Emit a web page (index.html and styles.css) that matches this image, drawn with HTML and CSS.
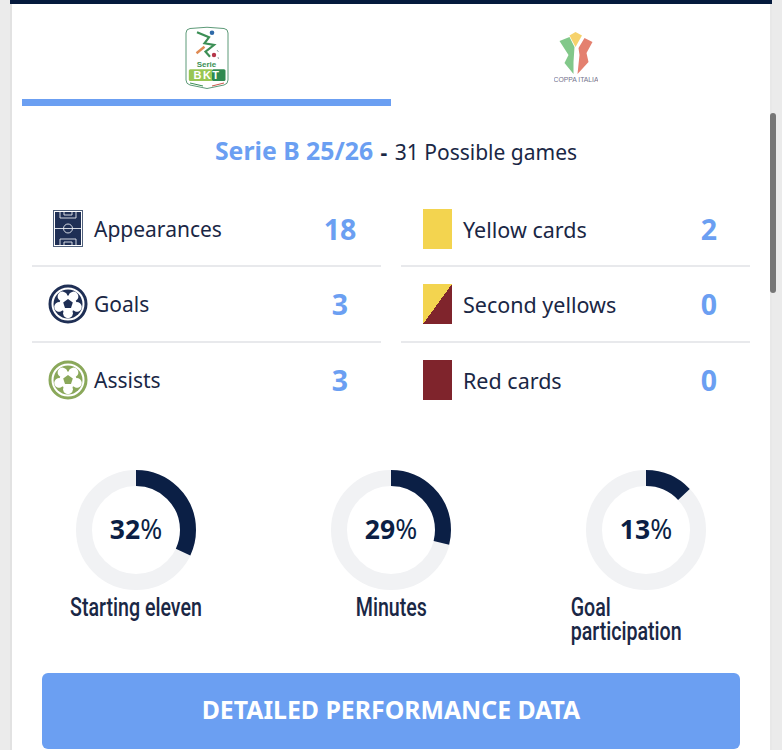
FILE: index.html
```html
<!DOCTYPE html>
<html lang="en">
<head>
<meta charset="utf-8">
<title>Player stats</title>
<link rel="stylesheet" href="styles.css">
</head>
<body>
<svg class="defs" width="0" height="0" aria-hidden="true">
  <defs>
    <g id="panels">
      <circle cx="20" cy="10.700" r="4.900" fill="#fff" transform="rotate(36 20 20)"/>
      <circle cx="20" cy="10.700" r="4.900" fill="#fff" transform="rotate(108 20 20)"/>
      <circle cx="20" cy="10.700" r="4.900" fill="#fff" transform="rotate(180 20 20)"/>
      <circle cx="20" cy="10.700" r="4.900" fill="#fff" transform="rotate(252 20 20)"/>
      <circle cx="20" cy="10.700" r="4.900" fill="#fff" transform="rotate(324 20 20)"/>
      <circle cx="20" cy="20" r="8.500" fill="#fff"/>
    </g>
  </defs>
</svg>
<div class="frame">
<main class="card">
  <nav class="tabs">
    <div class="tab tab-active">
      <svg class="logo-serie" viewBox="0 0 44 64" width="44" height="64">
        <path d="M1 7 Q1 3 5 2.500 Q22 0 39 2.500 Q43 3 43 7 V54 Q43 58 39 59 L22 62.500 L5 59 Q1 58 1 54 Z" fill="#fff" stroke="#5d9a78" stroke-width="1"/>
        <circle cx="27" cy="6.700" r="2.300" fill="#2f6aa8"/>
        <path d="M12 6.300 L24 11.300 L19.500 17.300 L29 19 L20.500 25.700 L25 30.700" fill="none" stroke="#3c8f55" stroke-width="2.200"/>
        <path d="M11.500 27.300 L19.500 20.700" stroke="#df8a52" stroke-width="2.400"/>
        <circle cx="29" cy="29" r="2.200" fill="#b5374a"/>
        <path d="M32 24 L33.500 26 M33 31 L33.500 33" stroke="#99aaaa" stroke-width="1"/>
        <text x="21.500" y="41" class="serie-word">Serie</text>
        <rect x="3.800" y="43.300" width="24" height="11.700" rx="1.500" fill="#98c653"/>
        <rect x="27" y="43.300" width="13.500" height="11.700" rx="1.500" fill="#2f8a50"/>
        <text x="22" y="53.300" class="bkt-word">BKT</text>
        <path d="M5 57 L18 60" stroke="#3c8f55" stroke-width="1"/>
        <path d="M27 60 L39 57" stroke="#c9574a" stroke-width="1"/>
      </svg>
    </div>
    <div class="tab tab-other">
      <svg class="logo-coppa" viewBox="0 0 44 54" width="44" height="54">
        <path d="M21.500 0 L28 3.500 L21.500 15 L15.500 3.500 Z" fill="#f6d26c"/>
        <path d="M5.500 9 L15.500 5 L20.500 15 L19.500 30 L19.500 42 L10.500 31 L14.500 23 Z" fill="#82c88a"/>
        <path d="M38.500 10 L30.500 6 L24.500 16 L25.500 23 L23.500 42 L34.500 30 L32.500 21 Z" fill="#e4806f"/>
        <text x="22" y="50" class="coppa-word">COPPA ITALIA</text>
      </svg>
    </div>
  </nav>

  <h2 class="title"><strong>Serie B 25/26</strong> <b class="dash">-</b> 31 Possible games</h2>

  <section class="stats">
    <div class="stat">
      <svg class="icon" viewBox="0 0 30 38" width="30" height="38">
        <rect x="0.500" y="0.500" width="29" height="36" fill="#fff" stroke="#51617c"/>
        <rect x="2" y="2" width="26" height="33" fill="#1f2f55"/>
        <g fill="none" stroke="#e8ebf0" stroke-width="0.900">
          <path d="M2 18.500 H28"/>
          <circle cx="15" cy="18.500" r="4.500"/>
          <path d="M7 2 V8 H23 V2 M7 35 V29 H23 V35 M11 2 V5 H19 V2 M11 35 V32 H19 V35"/>
        </g>
      </svg>
      <span class="name">Appearances</span><span class="val">18</span>
    </div>
    <div class="stat">
      <span class="card-y"></span>
      <span class="name">Yellow cards</span><span class="val">2</span>
    </div>
    <div class="stat">
      <svg class="ball" viewBox="0 0 40 40" width="40" height="40">
        <circle cx="20" cy="20" r="18" fill="#fff" stroke="#1f2f55" stroke-width="3"/>
        <circle cx="20" cy="20" r="14.500" fill="#1f2f55"/>
        <use href="#panels"/>
        <path d="M20 15 L24.800 18.500 L23 24 H17 L15.200 18.500 Z" fill="#1f2f55"/>
      </svg>
      <span class="name">Goals</span><span class="val">3</span>
    </div>
    <div class="stat">
      <span class="card-2y"></span>
      <span class="name">Second yellows</span><span class="val">0</span>
    </div>
    <div class="stat">
      <svg class="ball" viewBox="0 0 40 40" width="40" height="40">
        <circle cx="20" cy="20" r="18" fill="#fff" stroke="#8aa85a" stroke-width="3"/>
        <circle cx="20" cy="20" r="14.500" fill="#8aa85a"/>
        <use href="#panels"/>
        <path d="M20 15 L24.800 18.500 L23 24 H17 L15.200 18.500 Z" fill="#8aa85a"/>
      </svg>
      <span class="name">Assists</span><span class="val">3</span>
    </div>
    <div class="stat">
      <span class="card-r"></span>
      <span class="name">Red cards</span><span class="val">0</span>
    </div>
  </section>

  <section class="rings">
    <figure class="ring">
      <div class="dial">
        <svg viewBox="0 0 120 120" width="120" height="120">
          <circle cx="60" cy="60" r="52" class="track"/>
          <circle cx="60" cy="60" r="52" class="arc" pathLength="100" stroke-dasharray="32 100"/>
        </svg>
        <span class="pct"><b>32</b>%</span>
      </div>
      <figcaption>Starting eleven</figcaption>
    </figure>
    <figure class="ring">
      <div class="dial">
        <svg viewBox="0 0 120 120" width="120" height="120">
          <circle cx="60" cy="60" r="52" class="track"/>
          <circle cx="60" cy="60" r="52" class="arc" pathLength="100" stroke-dasharray="29 100"/>
        </svg>
        <span class="pct"><b>29</b>%</span>
      </div>
      <figcaption>Minutes</figcaption>
    </figure>
    <figure class="ring">
      <div class="dial">
        <svg viewBox="0 0 120 120" width="120" height="120">
          <circle cx="60" cy="60" r="52" class="track"/>
          <circle cx="60" cy="60" r="52" class="arc" pathLength="100" stroke-dasharray="13 100"/>
        </svg>
        <span class="pct"><b>13</b>%</span>
      </div>
      <figcaption>Goal participation</figcaption>
    </figure>
  </section>

  <a class="cta">DETAILED PERFORMANCE DATA</a>
</main>
</div>
<div class="thumb"></div>
</body>
</html>
```
FILE: styles.css
```css
* { box-sizing: border-box; }
html, body { margin: 0; height: 750px; overflow: hidden; }
body {
  background: #ebebeb;
  font-family: "Noto Sans", "Open Sans", sans-serif;
  color: #1a2745;
  position: relative;
}
.defs { position: absolute; }
.frame {
  margin: 0 10px;
  height: 750px;
  border-top: 4px solid #051a3d;
}
.card {
  height: 746px;
  background: #fff;
  border-left: 2px solid #e2e2e2;
  border-right: 2px solid #e8e8e8;
  padding: 0 10px;
}
.tabs { display: flex; height: 102px; }
.tab {
  flex: 1;
  display: flex;
  justify-content: center;
  padding-top: 22px;
}
.tab-active { border-bottom: 7px solid #6b9ff2; }
.tab-other { padding-top: 28px; }
.logo-serie, .logo-coppa { display: block; }
.serie-word { font: 700 8px "Liberation Sans", sans-serif; fill: #3c8f55; text-anchor: middle; }
.bkt-word { font: 700 11px "Liberation Sans", sans-serif; fill: #fff; text-anchor: middle; letter-spacing: 1.500px; }
.coppa-word { font: 400 6.800px "Liberation Sans", sans-serif; fill: #74738c; text-anchor: middle; }
.title {
  margin: 29px 0 0;
  height: 31px;
  text-align: center;
  font-size: 21px;
  font-weight: 400;
  line-height: 30px;
  padding-left: 10px;
}
.title strong { font-size: 24.800px; color: #6b9ff2; font-weight: 700; }
.dash { margin: 0 2px; }
.stats {
  display: grid;
  grid-template-columns: 349px 349px;
  column-gap: 20px;
  margin: 27px 10px 0;
}
.stat {
  display: flex;
  align-items: center;
  height: 76px;
  border-bottom: 2px solid #e8e9ec;
  font-size: 21px;
}
.stat:nth-child(-n+2) { height: 74px; }
.stat:nth-last-child(-n+2) { height: 74px; border-bottom: 0; }
.stat:nth-child(even) .name { font-size: 21.500px; }
.icon { margin-left: 21px; margin-right: 11px; flex: none; }
.ball { margin-left: 16px; margin-right: 6px; flex: none; }
.card-y, .card-2y, .card-r {
  width: 29px; height: 40px; margin-left: 22px; margin-right: 11px; flex: none;
}
.card-y { background: #f3d44f; }
.card-r { background: #7f242c; }
.card-2y { background: linear-gradient(to bottom right, #f3d44f 50%, #7f242c 50%); }
.name { flex: 1; }
.val {
  width: 40px;
  margin-right: 21px;
  text-align: center;
  font-size: 28.500px;
  font-weight: 700;
  color: #6b9ff2;
}
.rings {
  display: grid;
  grid-template-columns: repeat(3, 255px);
  margin: 53px 0 0 -13.500px;
}
.ring {
  margin: 0;
  display: flex;
  flex-direction: column;
  align-items: center;
}
.dial { position: relative; width: 120px; height: 120px; }
.dial svg { display: block; }
.track { fill: none; stroke: #f1f2f4; stroke-width: 16; }
.arc { fill: none; stroke: #0b1f45; stroke-width: 16; transform: rotate(-90deg); transform-origin: 60px 60px; }
.pct {
  position: absolute;
  inset: 0;
  display: flex;
  align-items: center;
  justify-content: center;
  padding-bottom: 2px;
  font-size: 26.500px;
  color: #0b1f45;
}
.pct b { font-weight: 700; }
figcaption {
  margin-top: 6px;
  max-width: 192px;
  font-family: "Roboto", sans-serif;
  font-weight: 500;
  font-size: 25px;
  line-height: 24px;
  color: #1a2745;
  transform: scaleX(0.785);
}
.cta {
  display: flex;
  align-items: center;
  justify-content: center;
  height: 76px;
  margin: 29px 20px 0;
  padding-bottom: 4px;
  border-radius: 6px;
  background: #6b9ff2;
  color: #fff;
  font-size: 24.800px;
  font-weight: 700;
}
.thumb {
  position: absolute;
  left: 770px;
  top: 113px;
  width: 6px;
  height: 180px;
  border-radius: 3px;
  background: #767676;
}
```
